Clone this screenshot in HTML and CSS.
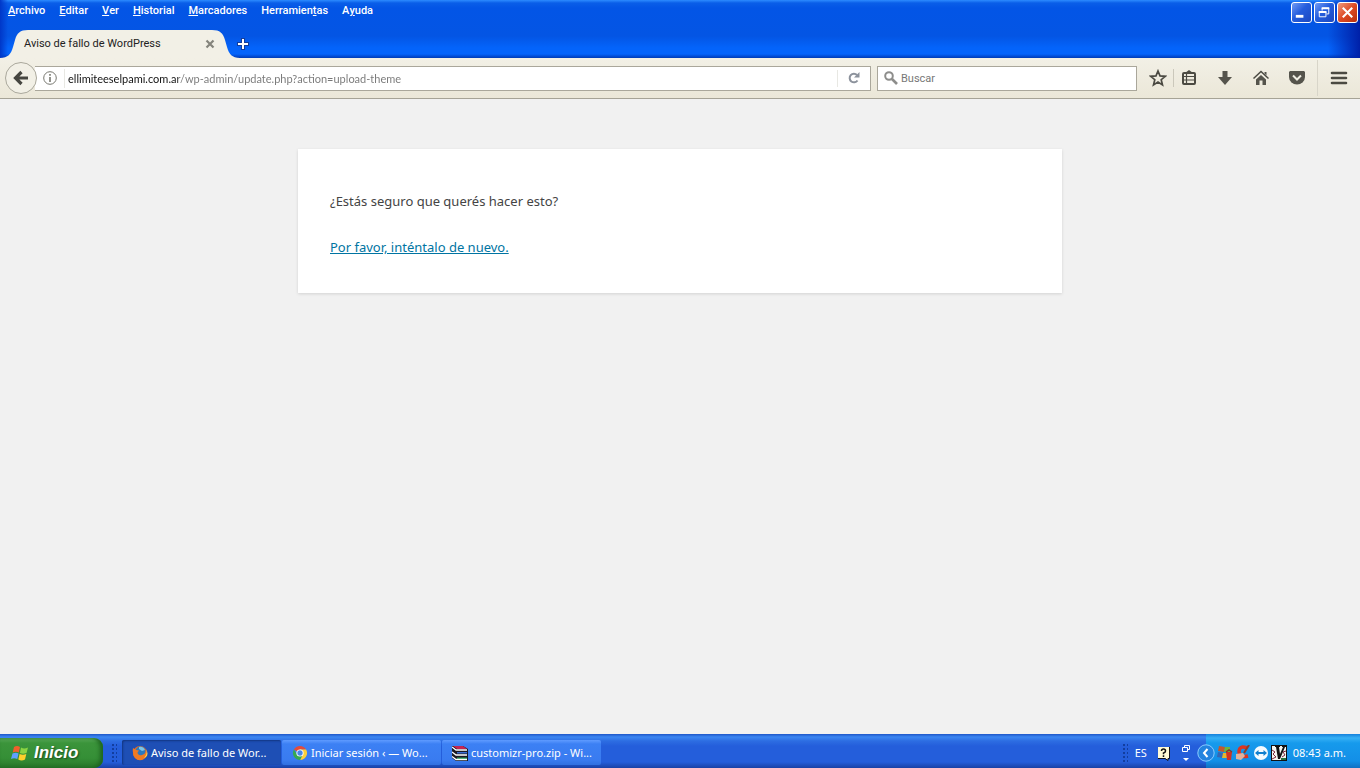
FILE: index.html
```html
<!DOCTYPE html>
<html lang="es">
<head>
<meta charset="utf-8">
<meta name="viewport" content="width=device-width, initial-scale=1">
<title>Aviso de fallo de WordPress</title>
<link rel="stylesheet" href="styles.css">
</head>
<body>
<header class="titlebar">
  <div class="titlebar-top">
    <nav class="menu" aria-label="Menú">
      <button class="menu-item"><u>A</u>rchivo</button>
      <button class="menu-item"><u>E</u>ditar</button>
      <button class="menu-item"><u>V</u>er</button>
      <button class="menu-item"><u>H</u>istorial</button>
      <button class="menu-item"><u>M</u>arcadores</button>
      <button class="menu-item">Herramien<u>t</u>as</button>
      <button class="menu-item">A<u>y</u>uda</button>
    </nav>
    <div class="window-controls">
      <button class="win-btn" aria-label="Minimizar"><svg viewBox="0 0 20 20"><path d="M4 14h8" stroke="#fff" stroke-width="3"/></svg></button>
      <button class="win-btn" aria-label="Restaurar"><svg viewBox="0 0 20 20" fill="none" stroke="#fff"><path d="M7.500 8V5.500h7v6H12"/><path d="M7 5.500h8M4 9.500h8" stroke-width="2"/><path d="M4.500 9v5.500h7V9"/></svg></button>
      <button class="win-btn win-close" aria-label="Cerrar"><svg viewBox="0 0 20 20"><path d="M5 5l10 10M15 5L5 15" stroke="#fff" stroke-width="2.200"/></svg></button>
    </div>
  </div>
  <div class="tabstrip">
    <div class="tab">
      <svg class="tab-shape" viewBox="0 0 240 28" aria-hidden="true"><path d="M0 28C8 28 11 24 13 17L15 10C17 3 20 0 28 0H212C220 0 223 3 225 10L227 17C229 24 232 28 240 28Z" fill="#f2f0e6"/></svg>
      <span class="tab-title">Aviso de fallo de WordPress</span>
      <button class="tab-close" aria-label="Cerrar pestaña"><svg viewBox="0 0 10 10"><path d="M1.500 1.500l7 7M8.500 1.500l-7 7" stroke="#85847c" stroke-width="2.200"/></svg></button>
    </div>
    <button class="new-tab" aria-label="Nueva pestaña"><svg viewBox="0 0 12 12"><path d="M6 0v12M0 6h12" stroke="#123d9c" stroke-width="4"/><path d="M6 1v10M1 6h10" stroke="#fff" stroke-width="2"/></svg></button>
  </div>
</header>
<div class="toolbar">
  <button class="back" aria-label="Atrás"><svg viewBox="0 0 16 16"><path d="M8.500 2L2.500 8l6 6M3 8h12" fill="none" stroke="#464640" stroke-width="3.200"/></svg></button>
  <div class="urlbar">
    <button class="info" aria-label="Información del sitio"><svg viewBox="0 0 14 14" fill="none" stroke="#77776f"><circle cx="7" cy="7" r="6.300"/><path d="M7 6v5" stroke-width="1.600"/><path d="M7 3v1.700" stroke-width="1.600"/></svg></button>
    <input class="url-input" type="text" aria-label="Dirección" value="ellimiteeselpami.com.ar/wp-admin/update.php?action=upload-theme">
    <button class="reload" aria-label="Recargar"><svg viewBox="0 0 12 12"><path d="M9.500 8.500A4.300 4.300 0 1 1 9 3" fill="none" stroke="#8c929c" stroke-width="2"/><path d="M11.500 0v5.500H6Z" fill="#8c929c"/></svg></button>
  </div>
  <label class="search">
    <svg viewBox="0 0 14 14" aria-hidden="true" fill="none" stroke="#8d8d8b"><circle cx="5" cy="5" r="3.800" stroke-width="2"/><path d="M8 8l5 5" stroke-width="2.600"/></svg>
    <input class="search-input" type="text" placeholder="Buscar" aria-label="Buscar">
  </label>
  <div class="actions">
    <button class="action" aria-label="Marcar"><svg viewBox="0 0 18 18"><path d="M9 2l2 4.900 5.200.4-4 3.400 1.300 5.200L9 13.100l-4.500 2.800 1.300-5.200-4-3.400L7 6.900Z" fill="none" stroke="#4b4a42" stroke-width="1.700"/></svg></button>
    <button class="action action-list" aria-label="Marcadores"><svg viewBox="0 0 18 18"><path d="M5 4L9 1l4 3Z" fill="#4b4a42"/><rect x="3" y="4" width="12" height="11" rx="1" fill="none" stroke="#4b4a42" stroke-width="2"/><path d="M4 7.500h10M4 11h10M6.500 5v9" stroke="#4b4a42" stroke-width="1.200"/></svg></button>
    <button class="action" aria-label="Descargas"><svg viewBox="0 0 18 18"><path d="M6.500 2h5v6H16l-7 8-7-8h4.500Z" fill="#55544c"/></svg></button>
    <button class="action" aria-label="Inicio"><svg viewBox="0 0 18 18"><path d="M1.500 9.500L9 2.500l7.500 7" fill="none" stroke="#4b4a42" stroke-width="1.500"/><path d="M12.500 3h2v3.500l-2-2ZM4 10.500L9 6l5 4.500V16h-3.500v-4.500h-3V16H4Z" fill="#55544c"/></svg></button>
    <button class="action" aria-label="Pocket"><svg viewBox="0 0 18 18"><path d="M2 2h14l1 1v5a8 7.500 0 0 1-16 0V3Z" fill="#55544c"/><path d="M5 6.500l4 4 4-4" fill="none" stroke="#f0eee3" stroke-width="2"/></svg></button>
  </div>
  <button class="hamburger" aria-label="Abrir menú"><svg viewBox="0 0 18 16"><path d="M2 3h14M2 8h14M2 13h14" stroke="#4b4a42" stroke-width="2.600" stroke-linecap="round"/></svg></button>
</div>
<main class="page">
  <section class="notice">
    <p>¿Estás seguro que querés hacer esto?</p>
    <p><a href="#">Por favor, inténtalo de nuevo.</a></p>
  </section>
</main>
<footer class="taskbar">
  <button class="start"><svg viewBox="0 0 18 18" aria-hidden="true"><path d="M3 3Q6 1 9 3L7.800 8.500Q5 7 1.700 8.500Z" fill="#f0602c"/><path d="M10 3.500Q13 5.500 17 3.500L15.500 9Q12 10.500 8.900 9Z" fill="#8bd443"/><path d="M1.500 9.500Q5 8 7.500 9.500L6.300 15Q3 13.500 0 15Z" fill="#5fa0ff"/><path d="M8.600 10Q12 11.500 15.300 10L14 15.500Q10.500 17.500 7.300 15.500Z" fill="#ffd02c"/></svg><span>Inicio</span></button>
  <span class="grip"></span>
  <div class="tasks">
    <button class="task task-active"><svg viewBox="0 0 16 16" aria-hidden="true"><circle cx="8" cy="8" r="7" fill="#e86b1c"/><circle cx="8.500" cy="6.500" r="5" fill="#2c79bf"/><path d="M7 2q4-1 6 3l-3 1-3-2Z" fill="#79c5e9"/><path d="M1 3l3 2 3 .5-1.500 2Q6 11 10 10q4-1 4-5 2 6-2 9-5 3-9-1Q0 9 1 3Z" fill="#ef7a22"/><path d="M12 13q4-4 2-9 3 5 0 8Z" fill="#ffd34a"/></svg><span>Aviso de fallo de Wor...</span></button>
    <button class="task"><svg viewBox="0 0 16 16" aria-hidden="true"><path d="M8 8L1.900 4.500a7 7 0 0 1 12.200 0H8Z" fill="#e34b3c"/><path d="M8 8V4.500h6.100A7 7 0 0 1 8 15l3-6Z" fill="#fbcf3b"/><path d="M8 8l2 3-2 4A7 7 0 0 1 1.900 4.500L5 9.500Z" fill="#36a853"/><circle cx="8" cy="8" r="3.600" fill="#fff"/><circle cx="8" cy="8" r="2.700" fill="#4687e8"/></svg><span>Iniciar sesión ‹ — Wo...</span></button>
    <button class="task"><svg viewBox="0 0 16 16" aria-hidden="true"><path d="M0 1h11l5 3v12H4l-4-3Z" fill="#191923"/><path d="M1 1h10l4 3H5Z" fill="#c42552"/><path d="M5 7h10v1.500H5Z" fill="#386bd0"/><path d="M5 12.500h10V14H5Z" fill="#269958"/><path d="M0 2l4 3h11M0 7l4 3h11M0 11.500l4 3h11" fill="none" stroke="#fff" stroke-width="1.300"/></svg><span>customizr-pro.zip - Wi...</span></button>
  </div>
  <div class="langbar">
    <span class="grip grip-small"></span>
    <span class="lang">ES</span>
    <button class="lang-btn" aria-label="Ayuda"><svg viewBox="0 0 14 16"><path d="M1 2h11v11h-1v2l-3-2H1Z" fill="#fffbd5"/><path d="M1 13.500h7l3 2v-2h1.500V2" fill="none" stroke="#15151b"/><path d="M4.500 6q0-2 2-2t2 2Q8.500 7.500 6.500 8v1.200M6.500 10.200V12" fill="none" stroke="#111" stroke-width="1.500"/></svg></button>
    <button class="lang-btn lang-options" aria-label="Opciones de idioma"><svg viewBox="0 0 10 18"><path d="M3.500 3V1.500h5v4H7M1.500 3.500h5v4h-5Z" fill="none" stroke="#fff"/><path d="M2 14h6L5 17Z" fill="#fff"/></svg></button>
  </div>
  <div class="tray">
    <button class="tray-arrow" aria-label="Ocultar iconos"><svg viewBox="0 0 18 18"><circle cx="9" cy="9" r="8.200" fill="#2383df" stroke="#8bcbff"/><path d="M10.500 5L7 9l3.500 4" fill="none" stroke="#fff" stroke-width="2"/></svg></button>
    <svg viewBox="0 0 16 16" aria-hidden="true"><path d="M2 1l6 1-1 5-6-1Z" fill="#c4582c"/><path d="M8 2h5v5H7Z" fill="#6cb43e"/><path d="M1 7l6 1-1 5-6-1Z" fill="#3567b5"/><path d="M6 8h5v5H5Z" fill="#e0b732"/><path d="M9 7h6l-1 8h-4Z" fill="#cf3325"/><path d="M9 7l3-2 3 2" fill="none" stroke="#85372c" stroke-width="1.500"/></svg>
    <svg viewBox="0 0 16 16" aria-hidden="true"><path d="M12 3Q4 0 4 7q1 6 9 4" fill="none" stroke="#dc3522" stroke-width="3.500"/><path d="M14 0L9 8" stroke="#8c3d2d" stroke-width="2"/><path d="M1 9l7-1 2 3-4 4-5-1Z" fill="#e3b19a"/></svg>
    <svg viewBox="0 0 16 16" aria-hidden="true"><circle cx="8" cy="8" r="7" fill="#f5fbff"/><path d="M2 8l3.500-3v2h5V5L14 8l-3.500 3V9h-5v2Z" fill="#117fce"/></svg>
    <svg viewBox="0 0 16 16" aria-hidden="true"><path d="M0 0h16v16H0Z" fill="#111"/><path d="M1 1h14v14H1Z" fill="#f4f5ef"/><path d="M4 1h5v1H8l1 7 3-7h-1V1h4v1h-1L9 14H7L5 2H4Z" fill="#111"/><path d="M1 5l3 2-2 2 3 3M15 6l-3 1 2 3-3 2M1 14l4-2" fill="none" stroke="#7c273c"/><path d="M10 13h5v2h-5Z" fill="#27713d"/></svg>
    <time class="clock">08:43 a.m.</time>
  </div>
</footer>
</body>
</html>
```
FILE: styles.css
```css
* { box-sizing: border-box; }
body {
  margin: 0;
  min-height: 100vh;
  display: flex;
  flex-direction: column;
  background: #f1f1f1;
  font: 11px/16px Roboto, "Noto Sans", sans-serif;
}
button, input { font: inherit; color: inherit; border: 0; padding: 0; background: none; }
button { display: flex; align-items: center; justify-content: center; flex: none; }
svg { display: block; flex: none; }

.titlebar {
  height: 58px;
  display: flex;
  flex-direction: column;
  justify-content: space-between;
  background:
    linear-gradient(to right, #0037c8, transparent 8px),
    linear-gradient(to left, #0020a8, transparent 32px),
    linear-gradient(#2c8bff 0, #0a5ee8 3px, #0355e6 8px, #0455e4 36px, #0464fb 48px, #0464fb 54px, #0044c8 57px, #003db5 58px);
}
.titlebar-top { display: flex; justify-content: space-between; }
.menu { display: flex; gap: 14px; padding: 3px 8px; color: #fff; font-weight: 500; }
.menu-item { height: 16px; }
.window-controls { display: flex; gap: 2px; padding: 2px; }
.win-btn {
  width: 21px;
  height: 21px;
  border: 1px solid #fff;
  border-radius: 3px;
  background: linear-gradient(135deg, #719bf5, #245ddd 45%, #1c48c0);
}
.win-btn svg { width: 19px; height: 19px; }
.win-close { background: linear-gradient(135deg, #f09a7d, #dd4a24 50%, #b92f0d); }
.tabstrip { display: flex; height: 28px; }
.tab { width: 240px; display: grid; align-items: center; grid-template-columns: 1fr 35px; padding-left: 24px; position: relative; }
.tab-shape { position: absolute; inset: 0; width: 240px; height: 28px; }
.tab-title, .tab-close { position: relative; }
.tab-title { color: #222; line-height: 18px; }
.tab-close { width: 10px; height: 16px; }
.tab-close svg { width: 10px; height: 10px; }
.new-tab { width: 12px; margin-left: -3px; }
.new-tab svg { width: 12px; height: 12px; }

.toolbar {
  height: 41px;
  display: flex;
  align-items: center;
  background: linear-gradient(#f2f0e6, #ebe7d8);
  border-bottom: 1px solid #a6a396;
}
.back {
  width: 32px;
  height: 32px;
  margin: 0 -2px 0 5px;
  border: 1px solid #aaa89c;
  border-radius: 50%;
  background: #f2f0e6;
  z-index: 1;
}
.back svg { width: 16px; height: 16px; }
.urlbar, .search { display: flex; align-items: center; height: 25px; border: 1px solid #aaa79b; background: #fff; }
.urlbar { flex: 1; min-width: 0; border-left: 0; }
.info { width: 30px; height: 19px; border-right: 1px solid #e8e8e3; }
.info svg { width: 14px; height: 14px; }
.url-input {
  flex: 1;
  min-width: 0;
  height: 21px;
  margin-left: 3px;
  font-family: Lato, sans-serif;
  color: transparent;
  background: linear-gradient(to right, #111 110px, #777 110px);
  background-clip: text;
  -webkit-background-clip: text;
}
.reload { width: 33px; height: 17px; border-left: 1px solid #e8e8e3; }
.reload svg { width: 12px; height: 12px; }
.search { width: 260px; margin: 0 6px; padding-left: 6px; gap: 3px; }
.search svg { width: 14px; height: 14px; }
.search-input { flex: 1; min-width: 0; height: 21px; }
.search-input::placeholder { color: #777; opacity: 1; }
.actions { display: flex; gap: 6px; padding-right: 5px; }
.action { width: 30px; height: 18px; }
.action svg { width: 18px; height: 18px; }
.action-list { margin-left: -6px; margin-right: 1px; border-left: 1px solid #cbc8bb; }
.hamburger { width: 43px; height: 36px; border-left: 1px solid #d8d5c9; }
.hamburger svg { width: 18px; height: 16px; }

.page { flex: 1; padding: 50px 24px; }
.notice {
  max-width: 764px;
  margin: 0 auto;
  padding: 17px 32px 10px;
  background: #fff;
  box-shadow: 0 1px 3px rgba(0, 0, 0, .13);
  color: #444;
  font: 13px/21px "Noto Sans", sans-serif;
}
.notice p { margin: 25px 0; }
.notice a { color: #0074a2; }

.taskbar {
  height: 34px;
  display: flex;
  align-items: stretch;
  color: #fff;
  background: linear-gradient(#1e56c8 0, #3b86f2 3px, #2d6de2 7px, #245edb 12px, #245edb 28px, #1941a5);
  font-family: "Noto Sans", sans-serif;
}
.start {
  width: 103px;
  margin-top: 4px;
  gap: 5px;
  justify-content: flex-start;
  padding-left: 11px;
  border-radius: 0 9px 9px 0;
  background: linear-gradient(#64b563, #3b943b 5px, #358f36 20px, #287629);
  box-shadow: inset -3px 0 4px #1d641f;
  font: italic bold 17px/22px "Liberation Sans", sans-serif;
  text-shadow: 1px 1px 2px #1b461c;
}
.start svg { width: 18px; height: 18px; }
.grip { width: 6px; margin: 9px 5px 5px 8px; background: radial-gradient(circle, #123e9f 1px, transparent 1px) 0 0 / 4px 4px; }
.tasks { display: flex; gap: 1px; padding: 6px 0 3px; flex: 1; min-width: 0; }
.task {
  flex: 0 1 159px;
  justify-content: flex-start;
  gap: 3px;
  padding-left: 10px;
  border-radius: 2px;
  background: linear-gradient(#5f9bff, #3c80f4 4px, #397bf0 20px, #3170e0);
  white-space: nowrap;
}
.task-active { background: #1e4fb5; box-shadow: inset 1px 1px 2px #123580; }
.task svg { width: 16px; height: 16px; }
.langbar { display: flex; align-items: center; padding-top: 4px; }
.grip-small { height: 20px; margin: 0 7px; }
.lang { width: 22px; }
.lang-btn svg { width: 14px; height: 16px; }
.lang-options { margin: 0 7px 0 10px; }
.lang-options svg { width: 10px; height: 18px; }
.tray {
  display: flex;
  align-items: center;
  gap: 2px;
  margin-left: 8px;
  padding: 4px 14px 0 0;
  background: linear-gradient(#1581dc 0, #36b0f5 4px, #169aec 9px, #138fe7 27px, #1270c2);
}
.tray svg { width: 16px; height: 16px; }
.tray-arrow { margin-left: -9px; }
.tray-arrow svg { width: 18px; height: 18px; }
.clock { margin-left: 4px; }
```
